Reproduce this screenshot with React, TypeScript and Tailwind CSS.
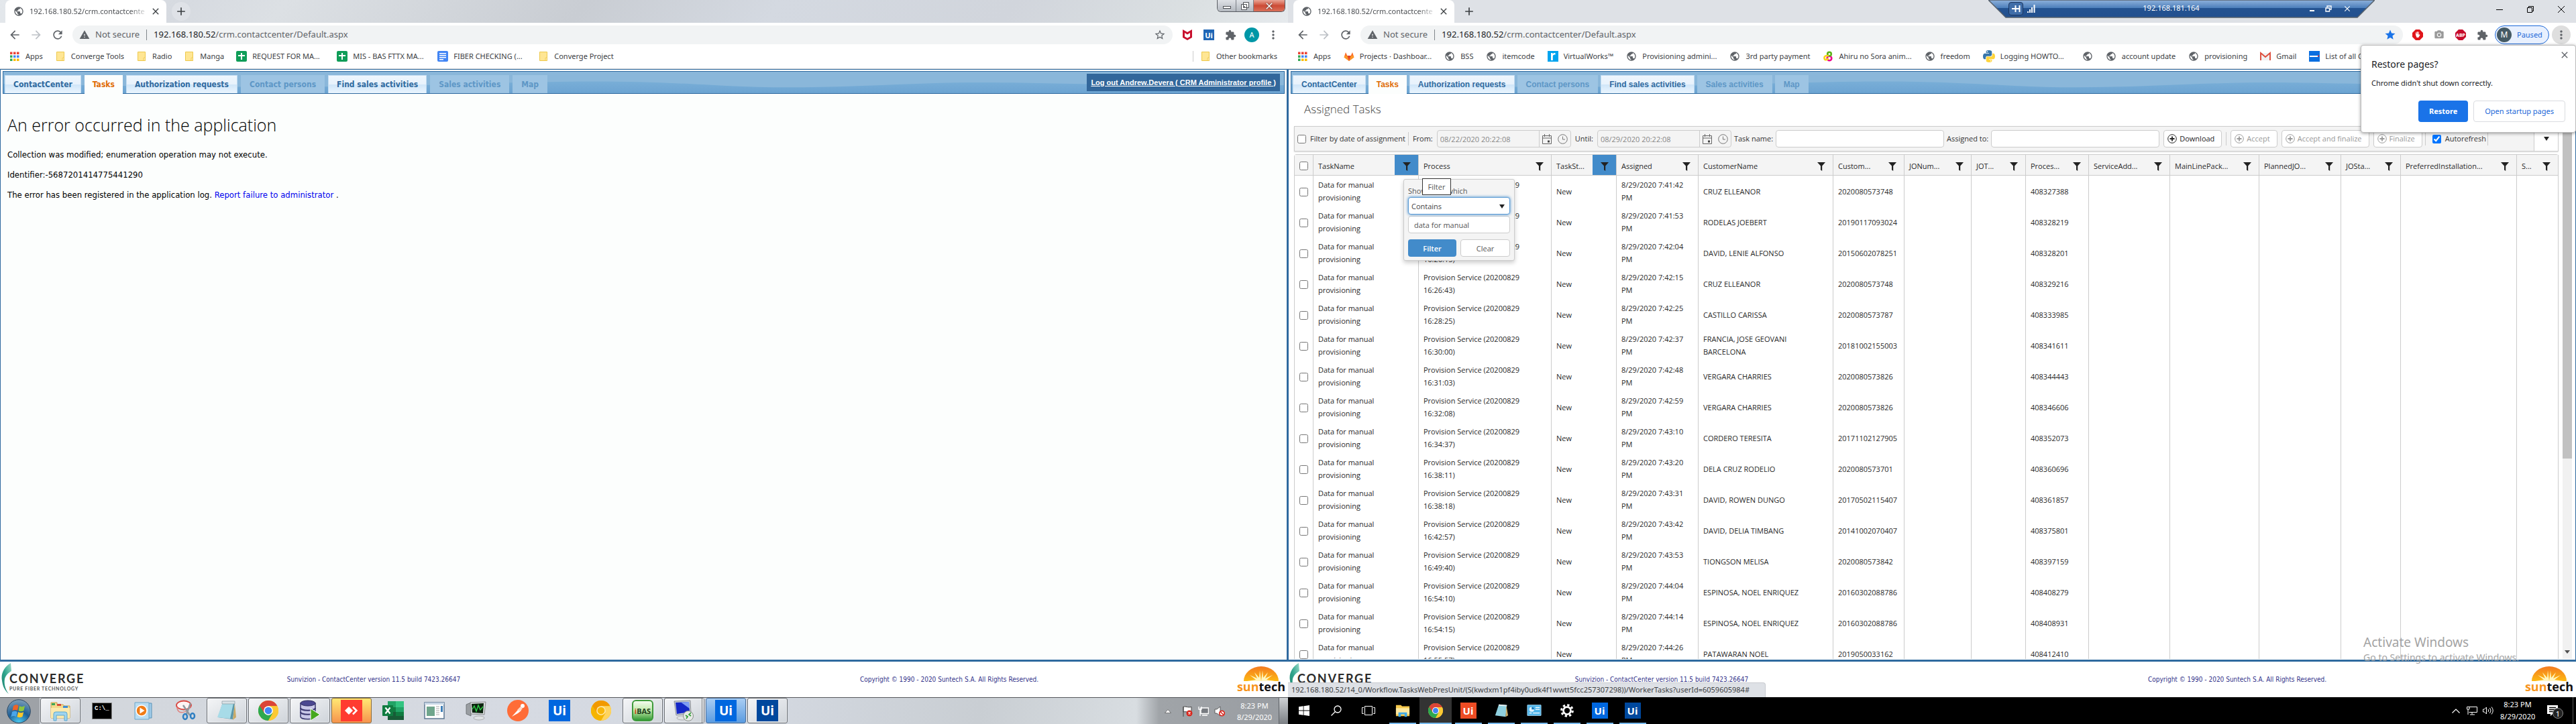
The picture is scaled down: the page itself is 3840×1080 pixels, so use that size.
import type { ReactNode } from "react";
import {
  MdAdd,
  MdArrowBack,
  MdArrowForward,
  MdCameraAlt,
  MdClose,
  MdExtension,
  MdMoreVert,
  MdPublic,
  MdRefresh,
  MdStar,
  MdStarBorder,
  MdWarning,
} from "react-icons/md";

/* ---------- small icons ---------- */

const Globe = () => <MdPublic className="size-4 text-[#5f6368]" />;

const Folder = () => (
  <svg viewBox="0 0 16 16" className="size-4">
    <path d="M2.5 1.5h11v13h-11z" fill="#ffe694" stroke="#edc84b" />
    <path d="M11 10.500l2.500-1v5H11z" fill="#ffe9a6" stroke="#edc84b" strokeWidth=".8" />
  </svg>
);

const AppsGrid = () => (
  <svg viewBox="0 0 16 16" className="size-4">
    {["#ea4335", "#ea4335", "#ea4335", "#34a853", "#4285f4", "#4285f4", "#34a853", "#fbbc05", "#fbbc05"].map((c, i) => (
      <rect key={i} x={1 + (i % 3) * 5} y={1.5 + Math.floor(i / 3) * 5} width="3.5" height="3.500" fill={c} />
    ))}
  </svg>
);

const Sheet = () => (
  <svg viewBox="0 0 16 16" className="size-4">
    <rect width="16" height="16" rx="2" fill="#0f9d58" />
    <path d="M7 3h2v3h4v2H9v5H7V8H3V6h4z" fill="#fff" />
  </svg>
);

const Doc = () => (
  <svg viewBox="0 0 16 16" className="size-4">
    <rect width="16" height="16" rx="2" fill="#4285f4" />
    <path d="M3 3h10v1.500H3zM3 6h10v1.500H3zM3 9h10v1.500H3zM3 12h6v1.500H3z" fill="#fff" />
  </svg>
);

const Fox = () => (
  <svg viewBox="0 0 16 16" className="size-4">
    <path d="M8 15L.5 9.500 3 2l2.300 5h5.400L13 2l2.500 7.500z" fill="#fc6d26" />
    <path d="M8 15L5.300 7h5.400z" fill="#e24329" />
    <path d="M.5 9.500L1.500 7h3.800L8 15zM15.500 9.500l-1-2.500h-3.800L8 15z" fill="#fca326" opacity=".75" />
  </svg>
);

const RSquare = () => (
  <svg viewBox="0 0 16 16" className="size-4">
    <rect width="16" height="16" fill="#00a4ef" />
    <path d="M5 14V3h2.500v1.500C8.300 3.300 9.500 2.700 11.500 3v2.700C9 5.300 7.800 6.300 7.800 8.500V14z" fill="#fff" />
  </svg>
);

const Knot = () => (
  <svg viewBox="0 0 16 16" className="size-4" fill="none" strokeWidth="2.600">
    <circle cx="10" cy="11" r="3.300" stroke="#ec008c" />
    <circle cx="10" cy="4.500" r="2.800" stroke="#5bb318" />
    <path d="M9 7.500C5 6 2 8 2.500 11s4 3 6 0" stroke="#f7d417" />
  </svg>
);

const snake =
  "M11.900 0C5.800 0 6.200 2.600 6.200 2.600v2.800h5.900v.8H3.900S0 5.800 0 11.900s3.400 5.900 3.400 5.900h2v-2.900s-.1-3.400 3.300-3.400h5.800s3.200.1 3.200-3.200V3.300S18.200 0 11.900 0zM8.700 1.800a1.100 1.100 0 1 1 0 2.200 1.100 1.100 0 0 1 0-2.200z";

const Python = () => (
  <svg viewBox="0 0 24 24" className="size-[18px]">
    <path d={snake} fill="#3776ab" />
    <path transform="rotate(180 12 12)" d={snake} fill="#ffd43b" />
  </svg>
);

const Gmail = () => (
  <svg viewBox="0 0 16 16" className="size-4">
    <path d="M1 3h14v11H1z" fill="#f1f1f1" />
    <path d="M1 14V3l7 6 7-6v11" fill="none" stroke="#dd4b39" strokeWidth="1.900" />
  </svg>
);

const Banner = () => (
  <svg viewBox="0 0 16 16" className="size-4">
    <rect width="16" height="16" fill="#0a6fe0" />
    <path d="M1 7h12v2H1z" fill="#fff" />
    <path d="M13 6.500h2v2h-2z" fill="#d33" />
  </svg>
);

const Funnel = () => (
  <svg viewBox="0 0 12 13" className="h-[13px] w-3">
    <path d="M0 0h12L7.200 5.500V13L5 11.500v-6z" fill="#222" />
  </svg>
);

const CirclePlus = () => (
  <svg viewBox="0 0 14 14" className="size-3.5" fill="none" stroke="currentColor">
    <circle cx="7" cy="7" r="6.300" />
    <path d="M7 3.500v7M3.500 7h7" strokeWidth="1.800" />
  </svg>
);

const CalendarIcon = () => (
  <svg viewBox="0 0 14 15" className="h-[15px] w-3.5" fill="none" stroke="#666">
    <path d="M.5 2.500h13v12H.5zM.5 6h13M3.500 0v4M10.500 0v4" />
    <path d="M8 9.500h3v3H8z" fill="#444" stroke="none" />
  </svg>
);

const ClockIcon = () => (
  <svg viewBox="0 0 15 15" className="size-[15px]" fill="none" stroke="#777">
    <circle cx="7.500" cy="7.500" r="6.800" />
    <path d="M7.500 3.500v4.500h3.500" />
  </svg>
);

const UiTile = ({ small }: { small?: boolean }) => (
  <span className={small ? "text-[11px] leading-none font-bold" : "text-[19px] leading-none font-bold"}>Ui</span>
);

const Chrome = ({ className, mono }: { className: string; mono?: boolean }) => (
  <svg viewBox="0 0 24 24" className={className}>
    <circle cx="12" cy="12" r="12" fill={mono ? "#f9b90a" : "#fbc116"} />
    <path d="M12 12L1.600 6A12 12 0 0 0 12 24l5.200-9z" fill={mono ? "#f5b400" : "#2da94f"} />
    <path d="M12 6.500h10.700A12 12 0 0 0 1.600 6l5.600 9L12 12z" fill={mono ? "#f29900" : "#db4437"} />
    <path d="M22.700 6.500H12L17.200 15 12 24A12 12 0 0 0 22.700 6.500z" fill={mono ? "#ffd45e" : "#fcc934"} />
    <circle cx="12" cy="12" r="5.500" fill={mono ? "#ffe9b0" : "#fff"} />
    <circle cx="12" cy="12" r="4.300" fill={mono ? "#f9b70b" : "#4285f4"} />
  </svg>
);

/* ---------- browser chrome ---------- */

type Bookmark = [ReactNode, string];

const leftBookmarks: Bookmark[] = [
  [<AppsGrid />, "Apps"],
  [<Folder />, "Converge Tools"],
  [<Folder />, "Radio"],
  [<Folder />, "Manga"],
  [<Sheet />, "REQUEST FOR MA..."],
  [<Sheet />, "MIS - BAS FTTX MA..."],
  [<Doc />, "FIBER CHECKING (..."],
  [<Folder />, "Converge Project"],
];

const rightBookmarks: Bookmark[] = [
  [<AppsGrid />, "Apps"],
  [<Fox />, "Projects · Dashboar..."],
  [<Globe />, "BSS"],
  [<Globe />, "itemcode"],
  [<RSquare />, "VirtualWorks™"],
  [<Globe />, "Provisioning admini..."],
  [<Globe />, "3rd party payment"],
  [<Knot />, "Ahiru no Sora anim..."],
  [<Globe />, "freedom"],
  [<Python />, "Logging HOWTO..."],
  [<Globe />, ""],
  [<Globe />, "account update"],
  [<Globe />, "provisioning"],
  [<Gmail />, "Gmail"],
  [<Banner />, "List of all C"],
];

function BrowserTab({ round }: { round?: boolean }) {
  return (
    <div className="flex h-full items-center pl-2">
      <div className="flex h-full w-60 items-center rounded-t-lg bg-white pl-3">
        <Globe />
        <span className="ml-2 w-[176px] overflow-hidden bg-linear-to-r from-[#45484c] from-85% to-white bg-clip-text text-[11px] whitespace-nowrap text-transparent">
          192.168.180.52/crm.contactcente
        </span>
        <button aria-label="Close tab" className="ml-1">
          <MdClose className="size-4 text-[#3c4043]" />
        </button>
      </div>
      <button
        aria-label="New tab"
        className={
          round
            ? "ml-2 flex size-7 items-center justify-center rounded-full bg-[#dfe2e7]"
            : "ml-2 flex size-7 items-center justify-center rounded-full"
        }
      >
        <MdAdd className="size-5 text-[#3c4043]" />
      </button>
    </div>
  );
}

function Toolbar({ starred, children }: { starred?: boolean; children: ReactNode }) {
  return (
    <div className="flex h-9 shrink-0 items-center bg-white pl-3">
      <button aria-label="Back"><MdArrowBack className="size-5 text-[#5f6368]" /></button>
      <button aria-label="Forward" className="ml-3"><MdArrowForward className="size-5 text-[#bdc1c6]" /></button>
      <button aria-label="Reload" className="ml-3"><MdRefresh className="size-5 text-[#5f6368]" /></button>
      <div className="ml-3 flex h-7 flex-1 items-center rounded-full bg-[#f1f3f4] pl-2.5 text-[13px]">
        <MdWarning className="size-4 text-[#5f6368]" />
        <span className="ml-2 text-[#5f6368]">Not secure</span>
        <span className="mx-2.5 h-4 w-px bg-[#80868b]" />
        <span className="text-[#202124]">
          192.168.180.52<span className="text-[#5f6368]">/crm.contactcenter/Default.aspx</span>
        </span>
        <button aria-label="Bookmark this page" className="mr-2.5 ml-auto">
          {starred ? <MdStar className="size-[18px] text-[#1a73e8]" /> : <MdStarBorder className="size-[18px] text-[#5f6368]" />}
        </button>
      </div>
      {children}
    </div>
  );
}

function BookmarkLinks({ items, label }: { items: Bookmark[]; label?: string }) {
  return (
    <>
      {items.map(([icon, text], i) => (
        <a key={i} href="#" aria-label={text || "Bookmark"} className={`flex shrink-0 items-center gap-2 ${text ? "" : "pl-2"}`}>
          {icon}
          {text && <span className={`whitespace-nowrap ${text.endsWith("...") ? label : ""}`}>{text}</span>}
        </a>
      ))}
    </>
  );
}

/* ---------- shared page pieces ---------- */

const navTabs = [
  ["ContactCenter", "on"],
  ["Tasks", "active"],
  ["Authorization requests", "on"],
  ["Contact persons", "off"],
  ["Find sales activities", "on"],
  ["Sales activities", "off"],
  ["Map", "off"],
];

const tabStyle: Record<string, string> = {
  on: "h-[27px] border border-b-0 border-[#c3ddf2] bg-[linear-gradient(#eef6fd_0%,#e8f2fc_50%,#d0e6f9_52%,#eaf5fe_100%)] text-[#2f6a9f]",
  active: "-mb-px h-7 bg-[#fcfefd] text-[#e06c06]",
  off: "h-[27px] border border-b-0 border-[#9cc4e2] bg-[#9dc4e3] text-[#5d97c6]",
};

function NavBar({ tabs, children }: { tabs: string; children?: ReactNode }) {
  return (
    <nav className="relative mx-[3px] mt-0.5 flex h-[34px] shrink-0 items-end border border-[#2f6a9f] bg-[#8ab7da] pl-0.5">
      <svg className="absolute inset-0 size-full" viewBox="0 0 1912 32" preserveAspectRatio="none">
        <defs>
          <linearGradient id="wave" x1="0" y1="0" x2="0" y2="1">
            <stop offset="0" stopColor="#79aed7" />
            <stop offset="1" stopColor="#6ca4d2" />
          </linearGradient>
        </defs>
        <path d="M0 18C300 24 500 24 700 18S950 14 1080 21s250-4 360-5 200 6 472 4V32H0z" fill="url(#wave)" />
      </svg>
      <div className={tabs}>
        {navTabs.map(([label, kind]) => (
          <button key={label} disabled={kind === "off"} className={`flex items-center px-3 font-bold whitespace-nowrap ${tabStyle[kind]}`}>
            {label}
          </button>
        ))}
      </div>
      {children}
    </nav>
  );
}

function PageFooter() {
  return (
    <footer className="grid h-[53px] shrink-0 grid-cols-[128px_1fr_1fr_76px] items-center bg-white text-[10px] text-[#33338a]">
      <div className="relative h-full pt-4 pl-3.5">
        <svg viewBox="0 0 20 46" className="absolute top-0.5 left-0.5 h-[46px] w-5">
          <defs>
            <linearGradient id="leaf" x1="1" y1="0" x2="0" y2="1">
              <stop offset="0" stopColor="#9ad9c9" />
              <stop offset=".5" stopColor="#2fa58c" />
              <stop offset="1" stopColor="#1d7f6d" />
            </linearGradient>
          </defs>
          <path d="M14 0C4 6-1 16 1 26c1 9 4 15 10 20C5 38 4 30 5 24c1-5 5-9 10-12z" fill="url(#leaf)" />
        </svg>
        <p className="relative font-[Lato] text-[18px] leading-[19px] font-bold tracking-widest text-[#2b2b2b]">CONVERGE</p>
        <p className="relative font-[Lato] text-[7px] leading-[10px] font-bold tracking-widest whitespace-nowrap text-[#555]">PURE FIBER TECHNOLOGY</p>
      </div>
      <p className="text-center">Sunvizion - ContactCenter version 11.5 build 7423.26647</p>
      <p className="text-center">Copyright © 1990 - 2020 Suntech S.A. All Rights Reserved.</p>
      <div className="flex flex-col items-center pr-1">
        <svg viewBox="0 0 52 22" className="h-[22px] w-[52px]">
          <defs>
            <linearGradient id="sun" x1="0" y1="0" x2="0" y2="1">
              <stop offset="0" stopColor="#f47a20" />
              <stop offset="1" stopColor="#fdb913" />
            </linearGradient>
          </defs>
          <path d="M0 22a26 22 0 0 1 52 0z" fill="url(#sun)" />
          <path d="M26 22L24 6l-1 11-7-8 4 9-11-5 9 7-13 2zM26 22L28 6l1 11 7-8-4 9 11-5-9 7 13 2z" fill="#fff6c2" />
        </svg>
        <p className="font-['Open_Sans'] text-[18px] leading-[17px] font-bold text-[#111]">
          <span className="text-[#f7941d]">sun</span>tech
        </p>
      </div>
    </footer>
  );
}

/* ---------- left monitor ---------- */

const taskButton =
  "flex h-full w-[60px] items-center justify-center rounded-[3px] border border-[#6c7075] bg-linear-to-br from-[#f4f5f7] to-[#cfd4da] shadow-[inset_0_0_0_1px_#ffffff80]";

const leftTasks: { name: string; look?: string; icon: ReactNode }[] = [
  {
    name: "File Explorer",
    look: "open",
    icon: (
      <svg viewBox="0 0 32 32" className="size-8">
        <path d="M2 4h9v3h9l2 2h8v18H2z" fill="#f3d98b" stroke="#c9a34a" />
        <path d="M3 5h5v3H3z" fill="#3aa757" />
        <path d="M11 6h6v3h-6z" fill="#d64a3a" />
        <path d="M20 9h7v3h-7z" fill="#3c8ed8" />
        <path d="M2 12h28v15H2z" fill="#fbe9ae" />
        <path d="M6 31V21q0-3 3-3h14q3 0 3 3v10h-4v-8H10v8z" fill="#9fd4ef" stroke="#5ba7cf" />
      </svg>
    ),
  },
  {
    name: "Command Prompt",
    icon: (
      <span className="flex h-[25px] w-[30px] items-start border border-[#888] bg-black pt-1 pl-[3px] font-['Liberation_Mono'] text-[9px] leading-none font-bold text-white">C:\_</span>
    ),
  },
  {
    name: "Media Player",
    icon: (
      <svg viewBox="0 0 32 32" className="size-8">
        <path d="M8 5h20v22H8z" fill="#9fcbe8" stroke="#5b93b8" />
        <path d="M3 4h21v25H3z" fill="#b9dcf1" stroke="#6aa5ca" />
        <circle cx="13" cy="16" r="8" fill="#f07b16" stroke="#fff" strokeWidth="1.500" />
        <path d="M10.500 11.500v9l7-4.500z" fill="#fff" />
      </svg>
    ),
  },
  {
    name: "Snipping Tool",
    icon: (
      <svg viewBox="0 0 32 32" className="size-8" fill="none">
        <ellipse cx="14" cy="8" rx="11" ry="6.500" fill="#fdf3f3" stroke="#d9453f" strokeWidth="1.800" />
        <path d="M4 11c0 12 16 9 20-2" stroke="#e08480" strokeWidth="1.500" />
        <path d="M13 8l10 15M24 5l-6 16" stroke="#8f989f" strokeWidth="2.500" />
        <ellipse cx="16" cy="25" rx="3" ry="4" stroke="#2f7fc2" strokeWidth="2.500" />
        <ellipse cx="27" cy="24" rx="3" ry="4" stroke="#2f7fc2" strokeWidth="2.500" />
      </svg>
    ),
  },
  {
    name: "Notepad",
    look: "open",
    icon: (
      <svg viewBox="0 0 32 32" className="size-8">
        <path d="M10 4l18 1-3 24-22-3z" fill="#5b97a9" />
        <path d="M10 4l16 1-5 23-19-2z" fill="#a7dbe8" />
        <path d="M9 2h19v4H9z" fill="#d9e2e6" stroke="#8b9aa1" strokeWidth=".7" />
        <path d="M28 6l2 20-5 4z" fill="#c9aa66" />
      </svg>
    ),
  },
  { name: "Google Chrome", look: "open", icon: <Chrome className="size-[30px]" /> },
  {
    name: "SQL Developer",
    look: "open",
    icon: (
      <svg viewBox="0 0 32 32" className="size-8">
        <path d="M2 5v20c0 5 22 5 22 0V5z" fill="#c9c8e8" stroke="#3a3770" strokeWidth="1.500" />
        <ellipse cx="13" cy="5" rx="11" ry="4" fill="#4b4891" stroke="#2d2a60" />
        <path d="M2 12c0 5 22 5 22 0M2 18c0 5 22 5 22 0" fill="none" stroke="#3a3770" strokeWidth="2" />
        <path d="M17 13v18l14-9z" fill="#46a81e" stroke="#fff" />
      </svg>
    ),
  },
  {
    name: "AnyDesk",
    look: "alert",
    icon: (
      <svg viewBox="0 0 32 32" className="size-8">
        <rect width="32" height="32" fill="#ff3b30" />
        <path d="M12 10l6 6-6 6-6-6z" fill="#fff" />
        <path d="M18 10.500l5.500 5.500-5.500 5.500" fill="none" stroke="#fff" strokeWidth="2.500" />
      </svg>
    ),
  },
  {
    name: "Excel",
    icon: (
      <svg viewBox="0 0 32 32" className="size-8">
        <path d="M8 2h12v9H8z" fill="#21a366" />
        <path d="M20 2h12v9H20z" fill="#33c481" />
        <path d="M8 11h12v7H8z" fill="#107c41" />
        <path d="M20 11h12v7H20z" fill="#21a366" />
        <path d="M8 18h24v12H8z" fill="#185c37" />
        <path d="M20 18h12v6H20z" fill="#107c41" />
        <rect y="8" width="16" height="16" rx="1" fill="#107c41" />
        <path d="M4.500 11.500l7 9M11.500 11.500l-7 9" stroke="#fff" strokeWidth="2.200" />
      </svg>
    ),
  },
  {
    name: "Report Viewer",
    icon: (
      <svg viewBox="0 0 32 32" className="size-8">
        <path d="M1 4h29v24H1z" fill="#fdfdfd" stroke="#5d7892" strokeWidth="1.500" />
        <path d="M1 4h29v3H1z" fill="#c6d5e4" />
        <path d="M4 10h12v14H4z" fill="#6fa58c" />
        <path d="M18 10h5M18 13h5M18 16h5M18 19h5M18 22h5" stroke="#aaa" />
        <path d="M25 9h3v9h-3z" fill="#3e7fb8" />
      </svg>
    ),
  },
  {
    name: "System Monitor",
    icon: (
      <svg viewBox="0 0 32 32" className="size-8">
        <path d="M1 7l7-3v20l-7-3z" fill="#9a9ea2" stroke="#63676b" strokeWidth=".8" />
        <path d="M7 4l23-1-2 19-20-1z" fill="#d9dcdf" stroke="#777" strokeWidth=".8" />
        <path d="M9 6l18-1-1 15-16-1z" fill="#0c230f" />
        <path d="M10 14l3-5 3 8 3-9 3 7 4-5" fill="none" stroke="#2fd148" strokeWidth="1.400" />
        <ellipse cx="20" cy="27" rx="8" ry="3" fill="#dfe2e5" stroke="#999" strokeWidth=".7" />
      </svg>
    ),
  },
  {
    name: "Postman",
    icon: (
      <svg viewBox="0 0 32 32" className="size-8">
        <circle cx="16" cy="16" r="16" fill="#ff6c37" />
        <path d="M7 25l9-10 4-1 1 2-5 4z" fill="#fff" />
        <circle cx="23" cy="9" r="3" fill="#fff" />
        <path d="M15 15l5-5 3 3-4 4z" fill="#ffd9c9" />
      </svg>
    ),
  },
  { name: "UiPath Studio", icon: <span className="flex size-8 items-center justify-center bg-[#0067df] text-white"><UiTile /></span> },
  { name: "Chrome Canary", icon: <Chrome className="size-[30px]" mono /> },
  {
    name: "iBAS",
    look: "open",
    icon: (
      <span className="flex size-8 items-center justify-center rounded-md border-2 border-[#3d9a3a] bg-linear-to-b from-[#f4fbef] via-[#bfe9a8] to-[#2f9a35] text-[11px] leading-none font-bold text-[#1d3d1a]">
        <span className="text-[#d0451b]">i</span>BAS
      </span>
    ),
  },
  {
    name: "Remote Desktop",
    look: "stack",
    icon: (
      <svg viewBox="0 0 32 32" className="size-8">
        <path d="M2 2l24-1 1 19-22 3z" fill="#c6cbd2" stroke="#787e86" strokeWidth=".8" />
        <path d="M4 4l20-1 1 15-19 3z" fill="#1527c6" />
        <path d="M12 3.500L24 3l1 10z" fill="#7f9cf3" />
        <ellipse cx="14" cy="27" rx="8" ry="3" fill="#dfe2e5" stroke="#999" strokeWidth=".7" />
        <circle cx="23" cy="24" r="7.500" fill="#e6e9e6" stroke="#8b8f8b" />
        <path d="M19 23l3 2-2 3M27 19l-3 3 3 2" fill="none" stroke="#2c9b2f" strokeWidth="1.600" />
      </svg>
    ),
  },
  { name: "UiPath Assistant", look: "focus", icon: <span className="flex size-8 items-center justify-center bg-[#0067df] text-white"><UiTile /></span> },
  { name: "UiPath Robot", look: "open", icon: <span className="flex size-8 items-center justify-center bg-[#00489d] text-white"><UiTile /></span> },
];

const taskLook: Record<string, string> = {
  plain: "flex h-full w-[60px] items-center justify-center",
  open: taskButton,
  stack: taskButton + " border-r-4 border-double",
  alert:
    "flex h-full w-[60px] items-center justify-center rounded-[3px] border border-[#8a6d3b] bg-linear-to-b from-[#ffe873] to-[#f5934d]",
  focus:
    "flex h-full w-[60px] items-center justify-center rounded-[3px] border border-[#4a6f9c] bg-linear-to-b from-[#a9cdf3] to-[#5a9be0]",
};

function LeftScreen() {
  return (
    <section className="flex min-w-0 flex-1 flex-col bg-white">
      <header className="flex h-[34px] shrink-0 items-start bg-[linear-gradient(125deg,#e4e8ec_0%,#d6dae0_14%,#dce0e4_22%,#c9cdd3_45%,#d4d9e1_60%,#d1d5dc_78%,#dbe0e2_92%,#e6eaed_100%)]">
        <BrowserTab round />
        <div className="mr-1 ml-auto flex h-[18px] overflow-hidden rounded-b-md border border-t-0 border-[#55595f] shadow-[0_0_2px_#fff]">
          <button aria-label="Minimize" className="flex w-7 items-center justify-center border-r border-[#7b7f86] bg-linear-to-b from-[#dfe2e6] via-[#c9cdd3] to-[#b3b8bf]">
            <span className="mt-1 h-1 w-3 border border-[#4b4e53] bg-white" />
          </button>
          <button aria-label="Restore window" className="flex w-[26px] items-center justify-center border-r border-[#7b7f86] bg-linear-to-b from-[#dfe2e6] via-[#c9cdd3] to-[#b3b8bf]">
            <svg viewBox="0 0 12 12" className="size-3" fill="#fff" stroke="#4b4e53">
              <path d="M3.500.5h8v8h-8zM.5 3.500h8v8h-8zM3.500 6.500h2v2h-2z" />
            </svg>
          </button>
          <button aria-label="Close window" className="flex w-[46px] items-center justify-center bg-linear-to-b from-[#e9a596] via-[#cc4a35] to-[#d9705a]">
            <MdClose className="size-4 text-white drop-shadow-[0_0_1px_#333]" />
          </button>
        </div>
      </header>

      <Toolbar>
        <div className="mx-1.5 flex items-center *:flex *:w-8 *:justify-center">
          <span>
            <svg viewBox="0 0 16 18" className="h-[18px] w-4">
              <path d="M1 1l7 4 7-4v12l-7 4-7-4zM4 6v5.500l4 2.300 4-2.300V6L8 8.500z" fill="#c8102e" fillRule="evenodd" />
            </svg>
          </span>
          <span><span className="flex size-4 items-center justify-center bg-[#1f66b5] text-white"><UiTile small /></span></span>
          <span><MdExtension className="size-[17px] text-[#5f6368]" /></span>
          <button aria-label="Profile A">
            <span className="flex size-[22px] items-center justify-center rounded-full bg-[#0097a7] text-[11px] text-white">A</span>
          </button>
          <button aria-label="Browser menu"><MdMoreVert className="size-5 text-[#5f6368]" /></button>
        </div>
      </Toolbar>
      <div className="flex h-[33px] shrink-0 items-center gap-[18px] border-b border-[#d5d7da] bg-white pb-1 pl-3.5 text-[11px] text-[#3c4043]">
        <BookmarkLinks items={leftBookmarks} label="min-w-[108px]" />
        <span className="ml-auto h-4 w-px bg-[#ccc]" />
        <a href="#" className="-ml-2 flex items-center gap-2 pr-4"><Folder />Other bookmarks</a>
      </div>

      <div className="flex min-h-0 flex-1 flex-col border-t border-r-2 border-b-3 border-l border-[#2f6a9f] bg-[#fcfefd] font-['DejaVu_Sans_Condensed','Noto_Sans',sans-serif]">
        <NavBar tabs="relative flex items-end gap-[5px] text-[12px]">
          <a href="#" className="relative mr-1.5 mb-[3px] ml-auto flex h-[26px] items-center bg-[#32679b] px-1.5 font-['Liberation_Sans'] text-[11px] font-bold text-white underline">
            Log out Andrew.Devera ( CRM Administrator profile )
          </a>
        </NavBar>
        <main className="px-2.5 pt-7 text-[13px] leading-[18px] text-black">
          <h1 className="font-['Open_Sans'] text-[25px] leading-9 font-light">An error occurred in the application</h1>
          <p className="mt-[18px]">Collection was modified; enumeration operation may not execute.</p>
          <p className="mt-3">Identifier:-5687201414775441290</p>
          <p className="mt-3">
            The error has been registered in the application log.{" "}
            <a href="#" className="text-[#0000ee]">Report failure to administrator</a> .
          </p>
        </main>
      </div>
      <div className="shrink-0 font-['DejaVu_Sans_Condensed','Noto_Sans',sans-serif]"><PageFooter /></div>

      <div className="flex h-10 shrink-0 border-t border-[#55575b] bg-[linear-gradient(100deg,#d2d6db_0%,#d6dae2_40%,#d3d8e0_60%,#c9ced3_76%,#d8dde1_88%,#d2d7df_100%)]">
        <button aria-label="Start" className="flex w-[59px] items-center justify-center bg-[#9ea2a7] pr-1">
          <svg viewBox="0 0 36 36" className="size-9">
            <defs>
              <radialGradient id="orb" cx=".5" cy="1" r="1">
                <stop offset="0" stopColor="#4fd0f5" />
                <stop offset=".5" stopColor="#1d5f97" />
                <stop offset="1" stopColor="#7f9fb8" />
              </radialGradient>
            </defs>
            <circle cx="18" cy="18" r="17.300" fill="url(#orb)" stroke="#2b4660" />
            <path d="M10 10q4-3 7.500-.5L16 17q-4-2-7.500.3z" fill="#ee6427" />
            <path d="M19 10q4 2.500 8-.2L25.500 17q-4 2.500-8 .3z" fill="#8cc63e" />
            <path d="M8 19q4-2.500 7.700-.3L14 26q-4-2-7.500.5z" fill="#4aa5e8" />
            <path d="M17.200 19q4 2.500 8 0L23.500 26q-4 2.500-8 .2z" fill="#fcc72b" />
          </svg>
        </button>
        {leftTasks.map((t) => (
          <div key={t.name} className="flex w-[62px] shrink-0 justify-center pb-px">
            <button aria-label={t.name} className={taskLook[t.look ?? "plain"]}>{t.icon}</button>
          </div>
        ))}
        <div className="ml-auto flex items-center bg-linear-to-r from-transparent via-[#a0a4a8] via-15% to-[#999da2] pl-[42px] text-white">
          <svg viewBox="0 0 10 6" className="mr-4 h-1.5 w-2.5"><path d="M5 .5L9.500 5.500h-9z" fill="#fff" stroke="#555" strokeWidth=".7" /></svg>
          <svg viewBox="0 0 16 16" className="mr-2 size-4">
            <path d="M2 1v15M2 1.500c4-1.500 6 1.500 12 0V9C8 10.500 6 7.500 2 9z" fill="#fff" stroke="#444" />
            <circle cx="11" cy="11" r="4.500" fill="#d9261c" />
            <path d="M9.500 9.500l3 3M12.500 9.500l-3 3" stroke="#fff" strokeWidth="1.400" />
          </svg>
          <svg viewBox="0 0 16 16" className="mr-2 size-4">
            <path d="M4 3h11.500v8.500H4zM6 14h8" fill="#777b80" stroke="#fff" strokeWidth="1.500" />
            <path d="M1 1v4h4V1M3 5v10" fill="none" stroke="#fff" strokeWidth="1.300" />
          </svg>
          <svg viewBox="0 0 16 16" className="mr-3 size-4">
            <path d="M1 5h3l5-4v14l-5-4H1z" fill="#fff" stroke="#444" strokeWidth=".8" />
            <circle cx="11.500" cy="11" r="3.700" fill="#fff" stroke="#d9261c" strokeWidth="1.700" />
            <path d="M9 8.500l5 5" stroke="#d9261c" strokeWidth="1.500" />
          </svg>
          <p className="w-16 text-center text-[11px] leading-[17px]">8:23 PM<br />8/29/2020</p>
          <button aria-label="Show desktop" className="ml-1 h-full w-3.5 border-l border-[#5f6368] bg-linear-to-b from-[#cfd2d5] to-[#7c8085]" />
        </div>
      </div>
    </section>
  );
}

/* ---------- right monitor ---------- */

const rows: [string, string, string, string, string][] = [
  ["16:24:18", "7:41:42", "CRUZ ELLEANOR", "2020080573748", "408327388"],
  ["16:25:02", "7:41:53", "RODELAS JOEBERT", "20190117093024", "408328219"],
  ["16:26:15", "7:42:04", "DAVID, LENIE ALFONSO", "20150602078251", "408328201"],
  ["16:26:43", "7:42:15", "CRUZ ELLEANOR", "2020080573748", "408329216"],
  ["16:28:25", "7:42:25", "CASTILLO CARISSA", "2020080573787", "408333985"],
  ["16:30:00", "7:42:37", "FRANCIA, JOSE GEOVANI\nBARCELONA", "20181002155003", "408341611"],
  ["16:31:03", "7:42:48", "VERGARA CHARRIES", "2020080573826", "408344443"],
  ["16:32:08", "7:42:59", "VERGARA CHARRIES", "2020080573826", "408346606"],
  ["16:34:37", "7:43:10", "CORDERO TERESITA", "20171102127905", "408352073"],
  ["16:38:11", "7:43:20", "DELA CRUZ RODELIO", "2020080573701", "408360696"],
  ["16:38:18", "7:43:31", "DAVID, ROWEN DUNGO", "20170502115407", "408361857"],
  ["16:42:57", "7:43:42", "DAVID, DELIA TIMBANG", "20141002070407", "408375801"],
  ["16:49:40", "7:43:53", "TIONGSON MELISA", "2020080573842", "408397159"],
  ["16:54:10", "7:44:04", "ESPINOSA, NOEL ENRIQUEZ", "20160302088786", "408408279"],
  ["16:54:15", "7:44:14", "ESPINOSA, NOEL ENRIQUEZ", "20160302088786", "408408931"],
  ["16:55:57", "7:44:26", "PATAWARAN NOEL", "2019050033162", "408412410"],
];

const columns: [string, number][] = [
  ["TaskName", 157],
  ["Process", 198],
  ["TaskSt...", 97],
  ["Assigned", 122],
  ["CustomerName", 201],
  ["Custom...", 106],
  ["JONum...", 100],
  ["JOT...", 81],
  ["Proces...", 94],
  ["ServiceAdd...", 121],
  ["MainLinePack...", 133],
  ["PlannedJO...", 122],
  ["JOSta...", 89],
  ["PreferredInstallation...", 173],
  ["S...", 62],
];

function FilterPopup() {
  return (
    <div className="absolute top-9 left-[134px] z-10 h-[122px] w-[166px] rounded-[3px] border border-[#ccc] bg-[#f4f4f4] px-1.5 pt-2 font-normal text-[#555] shadow-[0_3px_6px_#0003]">
      <p className="leading-[18px]">Show rows which</p>
      <div className="relative">
        <select aria-label="Condition" defaultValue="Contains" className="h-[26px] w-full appearance-none rounded border border-[#5b9bd5] bg-white px-1 text-[#444] shadow-[0_0_4px_#428bca]">
          <option>Contains</option>
        </select>
        <svg viewBox="0 0 8 6" className="absolute top-[11px] right-2 h-1.5 w-2"><path d="M0 0h8L4 6z" fill="#222" /></svg>
      </div>
      <input aria-label="Filter value" defaultValue="data for manual" className="mt-0.5 h-[26px] w-full rounded border border-[#ccc] bg-white px-2 text-[#555]" />
      <div className="mt-[9px] flex gap-1.5">
        <button className="h-[26px] flex-1 rounded bg-[#428bca] font-semibold text-white">Filter</button>
        <button className="h-[26px] flex-1 rounded border border-[#ccc] bg-white">Clear</button>
      </div>
      <span role="tooltip" className="absolute -top-0.5 left-[27px] flex h-[25px] w-[43px] items-center justify-center border border-[#333] bg-white text-[#555]">
        Filter
      </span>
    </div>
  );
}

function DateField({ id, value }: { id: string; value: string }) {
  return (
    <div className="flex h-[26px] w-[200px] shrink-0 items-center rounded border border-[#ccc] bg-[#f4f4f4]">
      <input id={id} defaultValue={value} className="h-full w-[152px] shrink-0 border-r border-[#ccc] px-1 text-[#888]" />
      <button aria-label="Open calendar" className="flex w-6 justify-center"><CalendarIcon /></button>
      <button aria-label="Open time list" className="flex w-6 justify-center"><ClockIcon /></button>
    </div>
  );
}

const ToolButton = ({ children, off }: { children: string; off?: boolean }) => (
  <button disabled={off} className={`flex h-[26px] shrink-0 items-center gap-1 rounded border border-[#ccc] bg-white pr-2.5 pl-[5px] ${off ? "text-[#999]" : "text-[#222]"}`}>
    <CirclePlus />
    {children}
  </button>
);

function TaskGrid() {
  return (
    <table className="w-full table-fixed border-separate border-spacing-0 rounded-t border-t border-l border-[#ccc] text-left text-[11px] leading-[19px] text-[#2a2a2a]">
      <colgroup>
        <col className="w-[28px]" />
        {columns.map(([name, w]) => (
          <col key={name} style={{ width: w }} />
        ))}
      </colgroup>
      <thead>
        <tr className="h-[31px] bg-[#f4f4f4]">
          <th className="border-r border-b border-[#ccc] p-0 text-center">
            <input type="checkbox" aria-label="Select all rows" className="size-[13px] align-middle" />
          </th>
          {columns.map(([name], i) => {
            const active = name === "TaskName" || name === "TaskSt...";
            return (
              <th key={name} className="relative border-r border-b border-[#ccc] p-0 font-normal">
                <div className="flex h-[30px] items-center justify-between pl-[7px] whitespace-nowrap">
                  <span className="pt-0.5">{name}</span>
                  <button aria-label={`Filter ${name}`} className={`flex h-full w-[35px] shrink-0 items-center justify-center pt-1 ${active ? "bg-[#428bca]" : ""}`}>
                    <Funnel />
                  </button>
                </div>
                {i === 0 && <FilterPopup />}
              </th>
            );
          })}
        </tr>
      </thead>
      <tbody>
        {rows.map(([process, time, customer, account, id]) => (
          <tr key={id} className="h-[46px] *:border-r *:border-[#ccc] *:whitespace-pre-line">
            <td className="p-0 text-center">
              <input type="checkbox" aria-label={`Select task ${id}`} className="size-[13px] align-middle" />
            </td>
            <td className="pl-[7px]">{"Data for manual\nprovisioning"}</td>
            <td className="pl-[7px]">{`Provision Service (20200829\n${process})`}</td>
            <td className="pl-[7px]">New</td>
            <td className="pl-[7px]">{`8/29/2020 ${time}\nPM`}</td>
            <td className="pl-[7px]">{customer}</td>
            <td className="pl-[7px]">{account}</td>
            <td />
            <td />
            <td className="pl-[7px]">{id}</td>
            <td />
            <td />
            <td />
            <td />
            <td />
            <td />
          </tr>
        ))}
      </tbody>
    </table>
  );
}

function RestoreBubble() {
  return (
    <div role="dialog" aria-label="Restore pages?" className="absolute top-[67px] right-0 z-20 w-[321px] rounded border border-[#bbb] bg-white px-[15px] pt-4 pb-[15px] text-[11px] text-[#202124] shadow-[0_1px_5px_#0006]">
      <button aria-label="Dismiss" className="absolute top-1.5 right-2"><MdClose className="size-4 text-[#5f6368]" /></button>
      <h2 className="text-[14px] leading-6">Restore pages?</h2>
      <p className="mt-1.5 leading-5">Chrome didn't shut down correctly.</p>
      <div className="mt-4 flex justify-end gap-2">
        <button className="h-8 rounded bg-[#1a73e8] px-4 font-bold text-white">Restore</button>
        <button className="h-8 rounded border border-[#dadce0] px-4 text-[#1a67d8]">Open startup pages</button>
      </div>
    </div>
  );
}

function RemoteBar() {
  return (
    <div className="absolute top-0 right-[300px] flex h-[27px] w-[576px] items-center pb-0.5 pl-[30px] text-white">
      <svg viewBox="0 0 576 27" preserveAspectRatio="none" className="absolute inset-0 size-full">
        <defs>
          <linearGradient id="rdp" x1="0" y1="0" x2="0" y2="1">
            <stop offset="0" stopColor="#8fb2dc" />
            <stop offset=".45" stopColor="#4d7fbb" />
            <stop offset=".46" stopColor="#245391" />
            <stop offset="1" stopColor="#22508f" />
          </linearGradient>
        </defs>
        <path d="M0 0h576l-26 26H26z" fill="url(#rdp)" stroke="#56606c" strokeWidth="1.500" />
      </svg>
      <button aria-label="Pin" className="relative flex h-5 w-[22px] items-center justify-center rounded border border-[#1d3760] bg-[#3f6da8]">
        <svg viewBox="0 0 13 10" className="h-2.5 w-[13px]"><path d="M0 5h5M5.500 0v10M11.500 0v10M6 5h5" stroke="#fff" strokeWidth="2" fill="none" /></svg>
      </button>
      <svg viewBox="0 0 12 12" className="relative ml-1.5 size-3" fill="#fff">
        <path d="M0 10h2v2H0zM3 7h2v5H3zM6 4h2v8H6zM9.500 0h2v12h-2z" />
      </svg>
      <span className="relative flex-1 pl-5 text-center text-[11px]">192.168.181.164</span>
      <div className="relative mr-[34px] ml-6 flex items-center gap-4">
        <span className="mt-1.5 h-0.5 w-[7px] bg-white" />
        <svg viewBox="0 0 10 10" className="size-2.5" fill="none" stroke="#fff" strokeWidth="1.400"><path d="M3 3V1h6v5H7M1 4h5.500v5H1z" /></svg>
        <MdClose className="size-3.5" />
      </div>
    </div>
  );
}

const rightTasks: { name: string; look: string; icon: ReactNode }[] = [
  {
    name: "File Explorer",
    look: "border-b-2 border-[#76b9ed]",
    icon: (
      <svg viewBox="0 0 24 24" className="size-[22px]">
        <path d="M1 3h8l2 2h12v16H1z" fill="#f5c84b" />
        <path d="M1 8h22v10H1z" fill="#fde9a0" />
        <path d="M5 22v-7h14v7h-4v-4H9v4z" fill="#3fa9e5" />
      </svg>
    ),
  },
  { name: "Google Chrome", look: "w-12 border-b-2 border-[#76b9ed] bg-[#333]", icon: <Chrome className="size-[22px]" /> },
  { name: "UiPath Robot", look: "border-b-2 border-[#76b9ed]", icon: <span className="flex size-6 items-center justify-center bg-[#ee4c24]"><span className="text-[15px] leading-none font-bold">Ui</span></span> },
  {
    name: "Notepad",
    look: "border-b-2 border-[#76b9ed]",
    icon: (
      <svg viewBox="0 0 24 24" className="size-[22px]">
        <path d="M8 2l13 1-2 19L2 20z" fill="#8fd0df" />
        <path d="M20 3l3 17-4 2z" fill="#c9aa66" />
        <path d="M8 2l13 1v2L7.500 4z" fill="#e5eef0" />
      </svg>
    ),
  },
  {
    name: "Control Panel",
    look: "border-b-2 border-[#76b9ed]",
    icon: (
      <svg viewBox="0 0 24 24" className="size-[22px]">
        <path d="M1 3h22v17H1z" fill="#4fb5ea" stroke="#a9dcf7" />
        <circle cx="8" cy="10" r="4" fill="#dff3fd" />
        <path d="M8 10V6a4 4 0 0 1 4 4z" fill="#1473b8" />
        <path d="M14 7h7M14 10h7M4 16h4M10 16h11" stroke="#fff" strokeWidth="1.500" />
      </svg>
    ),
  },
  {
    name: "Settings",
    look: "border-b-2 border-[#76b9ed]",
    icon: (
      <svg viewBox="0 0 24 24" className="size-[22px]" fill="none" stroke="#fff">
        <circle cx="12" cy="12" r="6" strokeWidth="3" />
        <circle cx="12" cy="12" r="9" strokeWidth="3.500" strokeDasharray="3.530 3.530" />
      </svg>
    ),
  },
  { name: "UiPath Studio", look: "border-b-2 border-[#76b9ed]", icon: <span className="flex size-6 items-center justify-center bg-[#0067df]"><span className="text-[15px] leading-none font-bold">Ui</span></span> },
  { name: "UiPath Assistant", look: "border-b-2 border-[#76b9ed]", icon: <span className="flex size-6 items-center justify-center bg-[#00489d]"><span className="text-[15px] leading-none font-bold">Ui</span></span> },
];

function RightScreen() {
  return (
    <section className="relative flex min-w-0 flex-1 flex-col bg-white">
      <header className="relative flex h-[34px] shrink-0 items-start bg-[#dee1e6]">
        <BrowserTab />
        <RemoteBar />
        <div className="mt-2 mr-4 ml-auto flex gap-[34px]">
          <button aria-label="Minimize"><svg viewBox="0 0 12 12" className="size-3" stroke="#000"><path d="M1 6.500h10" /></svg></button>
          <button aria-label="Restore window"><svg viewBox="0 0 12 12" className="size-3" fill="none" stroke="#000"><path d="M3.500 3V1.500h7v7H9M1.500 3.500h7v7h-7z" /></svg></button>
          <button aria-label="Close window"><svg viewBox="0 0 12 12" className="size-3" stroke="#000"><path d="M1 1l10 10M11 1L1 11" /></svg></button>
        </div>
      </header>

      <Toolbar starred>
        <div className="ml-1.5 flex items-center *:flex *:w-8 *:justify-center">
          <span>
            <svg viewBox="0 0 16 16" className="size-4">
              <path d="M5 0h6l5 5v6l-5 5H5l-5-5V5z" fill="#e0151b" />
              <path d="M5 8V4.500h1.200V7h.5V3.200h1.200V7h.5V3.600h1.200V8l1-.8 1 .8-2.400 4H6.500z" fill="#fff" />
            </svg>
          </span>
          <span><MdCameraAlt className="size-4 text-[#9a9a9a]" /></span>
          <span>
            <span className="relative flex size-4 items-center justify-center">
              <svg viewBox="0 0 16 16" className="absolute inset-0 size-4"><path d="M5 0h6l5 5v6l-5 5H5l-5-5V5z" fill="#c70d2c" /></svg>
              <span className="relative text-[7px] leading-none font-bold text-white">ABP</span>
            </span>
          </span>
          <span><MdExtension className="size-[17px] text-[#5f6368]" /></span>
        </div>
        <button className="ml-[3px] flex h-7 w-[81px] items-center gap-2 rounded-full border border-[#1a67d8] bg-[#e8f0fe] pl-0.5 text-[12px] text-[#1a67d8]">
          <span className="flex size-[22px] shrink-0 items-center justify-center rounded-full bg-[#455a64] text-white">M</span>
          <span className="text-[11px]">Paused</span>
        </button>
        <button aria-label="Browser menu" className="mr-2 ml-1 flex size-7 items-center justify-center rounded-full bg-[#dedede]">
          <MdMoreVert className="size-5 text-[#5f6368]" />
        </button>
      </Toolbar>
      <div className="flex h-[33px] shrink-0 items-center gap-[19px] overflow-hidden border-b border-[#d5d7da] bg-white pb-1 pl-3.5 text-[11px] text-[#3c4043]">
        <BookmarkLinks items={rightBookmarks} />
      </div>

      <div className="flex min-h-0 flex-1 flex-col border border-b-3 border-[#2f6a9f] bg-white text-[11px] text-[#333]">
        <NavBar tabs="relative flex items-end gap-1 font-['Liberation_Sans'] text-[12px]" />
        <div className="flex min-h-0 flex-1 pr-[5px] pb-px font-['Open_Sans',sans-serif]">
          <main className="min-w-0 flex-1 overflow-hidden pl-2">
            <h1 className="pt-[11px] pb-[13px] pl-[15px] text-[17px] leading-6 font-light text-[#444]">Assigned Tasks</h1>
            <div className="flex h-[38px] items-center border border-[#ccc] bg-[#f4f4f4] whitespace-nowrap shadow-[0_1px_2px_#0002]">
              <label className="flex items-center gap-1.5 pl-1">
                <input type="checkbox" className="size-[13px]" />
                Filter by date of assignment
              </label>
              <span className="mr-1.5 ml-1 h-5 w-px bg-[#ccc]" />
              <label htmlFor="from" className="mr-1.5">From:</label>
              <DateField id="from" value="08/22/2020 20:22:08" />
              <label htmlFor="until" className="mx-1.5">Until:</label>
              <DateField id="until" value="08/29/2020 20:22:08" />
              <label htmlFor="task" className="mx-1">Task name:</label>
              <input id="task" className="h-[26px] min-w-0 flex-1 rounded border border-[#ccc] bg-white px-1" />
              <label htmlFor="assignee" className="mx-1">Assigned to:</label>
              <input id="assignee" className="mr-1.5 h-[26px] min-w-0 flex-1 rounded border border-[#ccc] bg-white px-1" />
              <ToolButton>Download</ToolButton>
              <span className="mx-1.5 h-5 w-px bg-[#ccc]" />
              <ToolButton off>Accept</ToolButton>
              <span className="w-1.5" />
              <ToolButton off>Accept and finalize</ToolButton>
              <span className="w-1.5" />
              <ToolButton off>Finalize</ToolButton>
              <span className="mr-2.5 ml-1 h-5 w-px bg-[#ccc]" />
              <label className="flex items-center gap-1.5">
                <input type="checkbox" defaultChecked className="size-[13px]" />
                Autorefresh
              </label>
              <span className="mr-[68px] ml-0.5 h-5 w-px bg-[#ccc]" />
              <button aria-label="More commands" className="flex h-full w-9 items-center justify-center border-l border-[#ccc] bg-white">
                <svg viewBox="0 0 8 6" className="h-1.5 w-2"><path d="M0 0h8L4 6z" fill="#222" /></svg>
              </button>
            </div>
            <div className="pt-1"><TaskGrid /></div>
          </main>
          <div className="ml-1.5 flex w-3.5 flex-col items-center bg-[#f1f1f1] pt-[18px] pb-2">
            <div className="h-[526px] w-full bg-[#c1c1c1]" />
            <svg viewBox="0 0 8 5" className="mt-auto h-[5px] w-2"><path d="M0 0h8L4 5z" fill="#505050" /></svg>
          </div>
        </div>
      </div>
      <div className="shrink-0 font-['DejaVu_Sans_Condensed','Noto_Sans',sans-serif]"><PageFooter /></div>

      <div className="flex h-10 shrink-0 items-stretch bg-black text-white">
        <button aria-label="Start" className="flex w-12 items-center justify-center">
          <svg viewBox="0 0 16 16" className="size-4" fill="#fff"><path d="M0 2.300L6.700 1.300v6.300H0zM7.500 1.200L16 0v7.600H7.500zM0 8.400h6.700v6.300L0 13.700zM7.500 8.400H16V16l-8.500-1.200z" /></svg>
        </button>
        <button aria-label="Search" className="flex w-12 items-center justify-center">
          <svg viewBox="0 0 16 16" className="size-4" fill="none" stroke="#fff" strokeWidth="1.300"><circle cx="10" cy="6" r="5" /><path d="M6.500 9.500L.5 15.500" /></svg>
        </button>
        <button aria-label="Task view" className="mr-0.5 flex w-12 items-center justify-center">
          <svg viewBox="0 0 20 16" className="h-4 w-5" fill="none" stroke="#fff"><path d="M4.500 1.500h11v13h-11zM3 3.500H.5v9H3M17 3.500h2.500v9H17" /></svg>
        </button>
        {rightTasks.map((t) => (
          <div key={t.name} className="flex w-[49px] justify-center">
            <button aria-label={t.name} className={`flex min-w-10 items-center justify-center pt-0.5 ${t.look}`}>{t.icon}</button>
          </div>
        ))}
        <div className="ml-auto flex items-center">
          <svg viewBox="0 0 12 7" className="h-[7px] w-3" fill="none" stroke="#fff" strokeWidth="1.200"><path d="M.5 6.500L6 1l5.500 5.500" /></svg>
          <svg viewBox="0 0 16 14" className="ml-2.5 h-3.5 w-4" fill="none" stroke="#fff"><path d="M4 1.500h11.500v8H3.500M8 9.500v3M5 13h7M.5 1.500h3.500v3.500h-3.500zM2 5v8" /></svg>
          <svg viewBox="0 0 16 14" className="ml-2 h-3.5 w-4" fill="none" stroke="#fff"><path d="M.5 5h2l3-3v10l-3-3h-2zM8 5q1.500 2 0 4M10.500 3q3 4 0 8M13 1.500q4.500 5.500 0 11" /></svg>
          <p className="mx-2.5 w-[52px] text-center text-[11px] leading-[18px] whitespace-nowrap">8:23 PM<br />8/29/2020</p>
          <button aria-label="Notifications" className="relative mr-3.5 ml-2 size-6">
            <svg viewBox="0 0 16 16" className="size-4"><path d="M0 0h16v13h-8l-3 3v-3H0z" fill="#fff" /><path d="M3 3.500h10M3 6.500h10M3 9.500h6" stroke="#000" strokeWidth="1.300" /></svg>
            <span className="absolute right-0 bottom-0 flex size-4 items-center justify-center rounded-full border border-[#888] bg-[#222] text-[11px] leading-none">1</span>
          </button>
          <span className="mr-1 h-full w-px bg-[#555]" />
        </div>
      </div>

      <RestoreBubble />
      <div className="pointer-events-none absolute right-[85px] bottom-[89px] text-[#a3a3a3]">
        <p className="text-[19px] leading-[26px]">Activate Windows</p>
        <p className="text-[14px] leading-5">Go to Settings to activate Windows.</p>
      </div>
      <div className="absolute bottom-10 left-0 flex h-[22px] w-[712px] items-center rounded-tr border-t border-r border-[#c8cbd0] bg-[#dee1e6] pl-[5px] text-[11px] whitespace-nowrap text-[#3c4043]">
        192.168.180.52/14_0/Workflow.TasksWebPresUnit/(S(kwdxm1pf4iby0udk4f1wwtt5fcc257307298))/WorkerTasks?userId=6059605984#
      </div>
    </section>
  );
}

export default function App() {
  return (
    <div className="flex h-screen overflow-hidden font-['Noto_Sans',sans-serif]">
      <LeftScreen />
      <RightScreen />
    </div>
  );
}
